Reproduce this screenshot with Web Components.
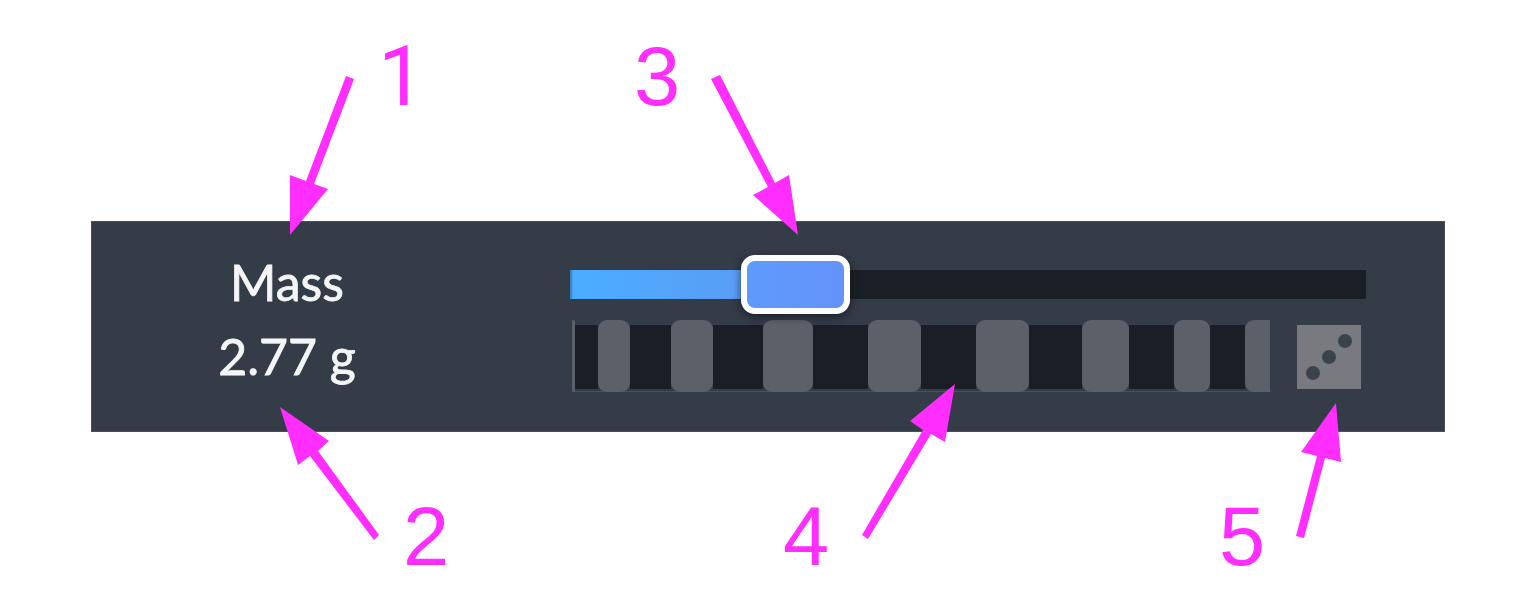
<!DOCTYPE html>
<html>
<head>
<meta charset="utf-8">
<title>Mass parameter</title>
<style>
  html, body { margin: 0; background: #fff; }
  body { width: 1536px; height: 615px; overflow: hidden; }
</style>
</head>
<body>
<annotated-figure>
  <param-row label="Mass" value="2.77 g" percent="21.6"></param-row>
  <call-out slot="marks" n="1" nx="378" ny="47" family="Roboto" points="346,76 354,79 314,184 328,189 290,235 290,175 306,181"></call-out>
  <call-out slot="marks" n="2" nx="403" ny="507" points="379,535 374,540 310,456 298,465 280,407 329,441 318,451"></call-out>
  <call-out slot="marks" n="3" nx="634" ny="47" points="711,79 720,75 775,183 789,175 798,235 753,195 768,187"></call-out>
  <call-out slot="marks" n="4" nx="783" ny="507" points="862,535 868,539 931,434 945,442 955,384 910,421 923,430"></call-out>
  <call-out slot="marks" n="5" nx="1219" ny="507" points="1296,536 1304,538 1325,458 1341,462 1336,403 1301,452 1317,456"></call-out>
</annotated-figure>

<script>
class AnnotatedFigure extends HTMLElement {
  constructor() {
    super();
    this.attachShadow({ mode: "open" });
    this.shadowRoot.innerHTML = `
      <style>
        :host { display: block; position: relative; width: 1536px; height: 615px; box-sizing: border-box; padding: 221px 91px 0; }
      </style>
      <slot></slot>
      <slot name="marks"></slot>
    `;
  }
}

class CallOut extends HTMLElement {
  constructor() {
    super();
    this.attachShadow({ mode: "open" });
  }

  connectedCallback() {
    const n = this.getAttribute("n");
    const nx = this.getAttribute("nx");
    const ny = this.getAttribute("ny");
    const points = this.getAttribute("points");
    const family = this.getAttribute("family") || "Liberation Sans";
    this.shadowRoot.innerHTML = `
      <style>
        :host { display: block; position: absolute; left: 0; top: 0; width: 1536px; height: 615px; pointer-events: none; }
        svg { position: absolute; left: 0; top: 0; }
        span {
          position: absolute;
          left: ${nx}px;
          top: ${ny}px;
          font: 83px/59px "${family}", Arial, sans-serif;
          color: #ff2eff;
        }
      </style>
      <svg width="1536" height="615"><polygon points="${points}" fill="#ff2eff"/></svg>
      <span>${n}</span>
    `;
  }
}

class ParamRow extends HTMLElement {
  constructor() {
    super();
    this.attachShadow({ mode: "open" });
  }

  connectedCallback() {
    this.shadowRoot.innerHTML = `
      <style>
        :host {
          display: grid;
          grid-template-columns: 392px 796px;
          column-gap: 87px;
          width: 1354px;
          height: 211px;
          background: #343c47;
          box-shadow: inset 0 0 0 1px #4a505a;
          box-sizing: border-box;
        }
        .label {
          display: flex;
          flex-direction: column;
          align-items: center;
          padding-top: 33px;
          gap: 18px;
          font: 400 50px/56px Lato, "Noto Sans", sans-serif;
          -webkit-text-stroke: 0.8px #f4f5f6;
          color: #f4f5f6;
          filter: blur(0.6px);
        }
        .controls {
          display: flex;
          flex-direction: column;
          gap: 21px;
          padding-top: 49px;
          filter: blur(0.7px);
        }
        .bottom { display: flex; align-items: flex-start; gap: 26px; padding-left: 2px; }
      </style>
      <div class="label">
        <div>${this.getAttribute("label")}</div>
        <div>${this.getAttribute("value")}</div>
      </div>
      <div class="controls">
        <range-slider percent="${this.getAttribute("percent")}"></range-slider>
        <div class="bottom">
          <tick-strip stops="3,23,32,41,42,50,50,55,53,55,53,53,47,45,36,35,25"></tick-strip>
          <dice-button></dice-button>
        </div>
      </div>
    `;
  }
}

class RangeSlider extends HTMLElement {
  constructor() {
    super();
    this.attachShadow({ mode: "open" });
  }

  connectedCallback() {
    this.shadowRoot.innerHTML = `
      <style>
        :host { display: block; position: relative; height: 29px; background: #1a1f26; }
        .fill {
          width: ${this.getAttribute("percent")}%;
          height: 100%;
          background: linear-gradient(90deg, #4aaeff, #5a9df6);
          box-shadow: inset 3px 0 2px -1px #3a7fc0;
        }
        .handle {
          position: absolute;
          left: 171px;
          top: -15px;
          width: 109px;
          height: 59px;
          box-sizing: border-box;
          border: 6px solid #fff;
          border-radius: 14px;
          background: linear-gradient(90deg, #5e9bfb, #6492f8);
          box-shadow: 0 3px 9px rgba(10, 14, 20, .6);
        }
      </style>
      <div class="fill"></div>
      <div class="handle"></div>
    `;
  }
}

class TickStrip extends HTMLElement {
  constructor() {
    super();
    this.attachShadow({ mode: "open" });
  }

  connectedCallback() {
    // widths alternate: rail edge / gap, tick, gap, tick ...
    const stops = this.getAttribute("stops").split(",").map(Number);
    const cells = stops.map((w, i) => {
      return `<div class="${i % 2 ? "gap" : "tick"}" style="width:${w}px"></div>`;
    }).join("");
    this.shadowRoot.innerHTML = `
      <style>
        :host { display: flex; width: 699px; height: 72px; box-shadow: inset 1px 0 0 #4a4f58, inset 0 -1px 0 #4a4f58; }
        .tick { background: #5c6069; border-radius: 9px; flex: none; }
        .gap { background: #1a1e26; margin: 5px 0 3px; flex: none; }
        .tick:first-child { background: #4a4f58; border-radius: 0; margin: 3px 0 2px; }
        .tick:last-child { border-radius: 9px 0 0 9px; }
      </style>
      ${cells}
    `;
  }
}

class DiceButton extends HTMLElement {
  constructor() {
    super();
    this.attachShadow({ mode: "open" });
    this.shadowRoot.innerHTML = `
      <style>
        :host { display: block; width: 64px; height: 64px; margin-top: 5px; background: #797a7f; }
        svg { display: block; }
      </style>
      <svg width="64" height="64" viewBox="0 0 64 64" fill="#3a424c">
        <circle cx="48" cy="16" r="7"/>
        <circle cx="32" cy="32" r="7"/>
        <circle cx="16" cy="48" r="7"/>
      </svg>
    `;
  }
}

customElements.define("annotated-figure", AnnotatedFigure);
customElements.define("call-out", CallOut);
customElements.define("param-row", ParamRow);
customElements.define("range-slider", RangeSlider);
customElements.define("tick-strip", TickStrip);
customElements.define("dice-button", DiceButton);
</script>
</body>
</html>
